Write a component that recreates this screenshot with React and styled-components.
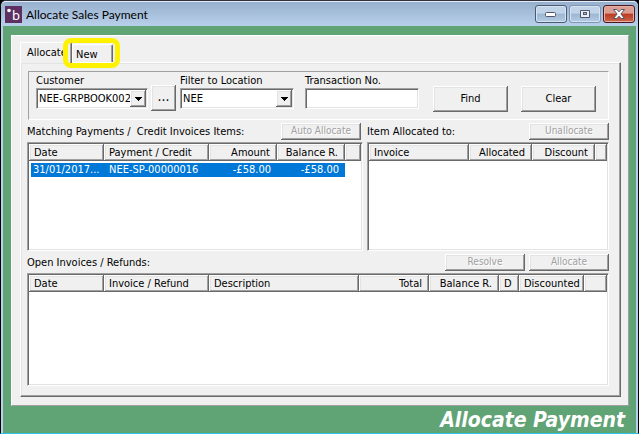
import React, { useState } from 'react';
import styled, { createGlobalStyle, css } from 'styled-components';

const GlobalStyle = createGlobalStyle`
  * {
    box-sizing: border-box;
  }
  body {
    margin: 0;
    background: #000;
  }
  body, button, input, select, table {
    font-family: "DejaVu Sans Condensed", "DejaVu Sans", Tahoma, sans-serif;
    font-size: 11px;
    line-height: 14px;
    color: #000;
  }
`;

const raised = css`
  box-shadow: inset -1px -1px #696969, inset 1px 1px #fff,
    inset -2px -2px #a0a0a0, inset 2px 2px #e3e3e3;
`;

const sunken = css`
  border: 1px solid;
  border-color: #a0a0a0 #fff #fff #a0a0a0;
  box-shadow: inset 1px 1px #696969, inset -1px -1px #e3e3e3;
`;

const Window = styled.div`
  display: flex;
  flex-direction: column;
  min-height: 100vh;
  padding: 0 2px;
  background: #b9d1ea;
  border: 1px solid #000;
  border-top-color: #30303c;
  border-bottom-color: #29c5e6;
  border-radius: 6px 6px 0 0;
`;

const TitleBar = styled.header`
  display: flex;
  align-items: center;
  height: 25px;
  margin: 0 -2px;
  padding: 0 3px 0 4px;
  border-top: 1px solid #e4edf7;
  border-radius: 5px 5px 0 0;
  background: linear-gradient(#97b0cd, #b8d0ea);
`;

const Title = styled.h1`
  flex: 1;
  margin: 0;
  padding: 2px 0 0 4px;
  font-family: Lato, "Segoe UI", sans-serif;
  font-size: 12px;
  font-weight: 400;
  line-height: 18px;
`;

const WindowButtons = styled.div`
  display: flex;
  gap: 2px;
`;

const WindowBtn = styled.button`
  display: flex;
  align-items: center;
  justify-content: center;
  width: 32px;
  height: 18px;
  padding: 0;
  border: 1px solid ${(p) => (p.$faded ? '#7d96b4' : '#4b5c72')};
  border-radius: 3px;
  background: linear-gradient(#c0d3e8 45%, #9db6d2 50%, #b4cce5);
  box-shadow: inset 0 0 0 1px #d5e3f2;
  ${(p) => p.$close && css`
    border-color: #4a1620;
    background: linear-gradient(#dc9d92 45%, #bb3a21 50%, #d0674c);
    box-shadow: inset 0 0 0 1px #e5b0a6;
  `}
`;

const Body = styled.main`
  display: flex;
  flex: 1;
  flex-direction: column;
  padding: 9px 7px 0 8px;
  background: #60a375;
`;

const Panel = styled.div`
  display: flex;
  flex: 1;
  flex-direction: column;
  padding: 6px 7px 8px 8px;
  background: #f0f0f0;
  border: 1px solid;
  border-color: #fff #a0a0a0 #a0a0a0 #fff;
`;

const Tabs = styled.div`
  position: relative;
  display: flex;
  align-items: flex-end;
  height: 20px;
`;

const Tab = styled.button`
  z-index: ${(p) => (p.$active ? 1 : 0)};
  min-width: ${(p) => p.$width}px;
  height: ${(p) => (p.$active ? 21 : 18)}px;
  margin-bottom: ${(p) => (p.$active ? -1 : 0)}px;
  padding: ${(p) => (p.$active ? '0 2px 1px 6px' : '2px 2px 0 3px')};
  background: #f0f0f0;
  border: 1px solid;
  border-color: #fff #696969 transparent #fff;
  border-bottom: 0;
  border-radius: 2px 2px 0 0;
  box-shadow: inset -1px 0 #a0a0a0;
  text-align: left;
`;

const TabHighlight = styled.span`
  position: absolute;
  z-index: 2;
  top: -4px;
  left: 43px;
  width: 57px;
  height: 30px;
  border: 5px solid #fff200;
  border-radius: 8px;
  pointer-events: none;
`;

const TabPage = styled.section`
  display: flex;
  flex: 1;
  flex-direction: column;
  padding: 8px 11px 10px 6px;
  border: 1px solid;
  border-color: #fff #696969 #696969 #fff;
  box-shadow: inset -1px -1px #a0a0a0, inset 1px 1px #e3e3e3;
`;

const Filters = styled.form`
  display: flex;
  align-items: flex-start;
  justify-content: space-between;
  height: 49px;
  margin-left: 1px;
  padding: 2px 12px 0 7px;
  border: 1px solid;
  border-color: #a0a0a0 #fff #fff #a0a0a0;
`;

const Fields = styled.div`
  display: flex;
`;

const Field = styled.div`
  display: flex;
  flex-direction: column;
  width: ${(p) => p.$width}px;
  margin-right: ${(p) => p.$gap || 0}px;
`;

const FieldLabel = styled.label`
  height: 14px;
`;

const Combo = styled.div`
  position: relative;
  display: flex;
`;

const Select = styled.select`
  ${sunken}
  width: 100%;
  height: 21px;
  padding: 0 17px 0 2px;
  appearance: none;
  background: #fff;
  border-radius: 0;
`;

const ComboArrow = styled.span`
  ${raised}
  position: absolute;
  top: 2px;
  right: 2px;
  display: flex;
  align-items: center;
  justify-content: center;
  width: 16px;
  height: 17px;
  background: #f0f0f0;
  pointer-events: none;
`;

const TextBox = styled.input`
  ${sunken}
  width: 100%;
  height: 21px;
  padding: 0 3px;
  background: #fff;
`;

const Button = styled.button`
  ${raised}
  width: ${(p) => p.$width}px;
  height: ${(p) => (p.$small ? 17 : 26)}px;
  padding: 0 0 1px;
  background: #f0f0f0;
  border: 0;
  font-size: ${(p) => (p.$small ? 10 : 11)}px;
  &:disabled {
    color: #a0a0a0;
    text-shadow: 1px 1px #fff;
  }
`;

const BrowseButton = styled(Button)`
  margin: 11px 4px 0 3px;
  padding-bottom: 4px;
  font-size: 14px;
`;

const SearchButtons = styled.div`
  display: flex;
  gap: 13px;
  padding-top: 12px;
`;

const Lists = styled.div`
  display: grid;
  grid-template-columns: 336fr 242fr;
  gap: 4px;
  margin-top: 3px;
`;

const ListHead = styled.div`
  display: flex;
  align-items: center;
  gap: 4px;
  height: 17px;
  margin-bottom: 2px;
  padding-right: ${(p) => p.$right || 0}px;
`;

const ListTitle = styled.h2`
  flex: 1;
  margin: 0;
  font-size: 11px;
  font-weight: 400;
  line-height: 14px;
  white-space: pre;
`;

const ListBox = styled.div`
  ${sunken}
  flex: 1;
  min-height: ${(p) => p.$height}px;
  padding: 1px;
  background: #fff;
`;

const Grid = styled.table`
  width: 100%;
  table-layout: fixed;
  border-collapse: separate;
  border-spacing: 0;
`;

const Th = styled.th`
  ${raised}
  height: 17px;
  padding: 1px 7px 0 5px;
  background: #f0f0f0;
  font-weight: 400;
  text-align: ${(p) => p.$align || 'left'};
  white-space: nowrap;
`;

const Spacer = styled.tr`
  height: 2px;
`;

const Td = styled.td`
  height: 14px;
  padding: 0 6px 0 5px;
  overflow: hidden;
  background: #0078d7;
  background-clip: padding-box;
  color: #fff;
  text-align: ${(p) => p.$align || 'left'};
  white-space: nowrap;
  &:first-child {
    padding: 0 0 0 2px;
    border-left: 2px solid #fff;
  }
`;

const OpenSection = styled.div`
  display: flex;
  flex: 1;
  flex-direction: column;
  margin-top: 3px;
`;

const Footer = styled.footer`
  padding: 2px 4px 0 0;
  color: #fff;
  font-size: 21px;
  font-style: italic;
  font-weight: 700;
  line-height: 25px;
  text-align: right;
`;

const paymentCols = [
  { label: 'Date', width: 75 },
  { label: 'Payment / Credit', width: 105 },
  { label: 'Amount', width: 68, align: 'right' },
  { label: 'Balance R.', width: 68, align: 'right' },
];

const allocatedCols = [
  { label: 'Invoice', width: 100 },
  { label: 'Allocated', width: 63, align: 'right' },
  { label: 'Discount', width: 63, align: 'right' },
];

const openCols = [
  { label: 'Date', width: 75 },
  { label: 'Invoice / Refund', width: 105 },
  { label: 'Description', width: 150 },
  { label: 'Total', width: 70, align: 'right' },
  { label: 'Balance R.', width: 70, align: 'right' },
  { label: 'D', width: 20 },
  { label: 'Discounted', width: 65 },
];

const payments = [['31/01/2017...', 'NEE-SP-00000016', '-£58.00', '-£58.00']];

const tabs = [
  { name: 'Allocate', width: 52 },
  { name: 'New', width: 41 },
];

function DataList({ label, cols, rows = [], height }) {
  return (
    <ListBox $height={height}>
      <Grid aria-label={label}>
        <colgroup>
          {cols.map((c) => <col key={c.label} width={c.width} />)}
          <col />
        </colgroup>
        <thead>
          <tr>
            {cols.map((c) => <Th key={c.label} $align={c.align}>{c.label}</Th>)}
            <Th as="td" />
          </tr>
        </thead>
        <tbody>
          <Spacer />
          {rows.map((row) => (
            <tr key={row[1]}>
              {row.map((cell, i) => <Td key={cols[i].label} $align={cols[i].align}>{cell}</Td>)}
            </tr>
          ))}
        </tbody>
      </Grid>
    </ListBox>
  );
}

function ComboBox({ id, value }) {
  return (
    <Combo>
      <Select id={id} defaultValue={value}>
        <option>{value}</option>
      </Select>
      <ComboArrow>
        <svg width="7" height="4" viewBox="0 0 7 4" shapeRendering="crispEdges">
          <path d="M0 0h7L3.5 4z" />
        </svg>
      </ComboArrow>
    </Combo>
  );
}

function Logo() {
  return (
    <svg width="17" height="17" viewBox="0 0 17 17">
      <rect width="17" height="17" fill="#5e3062" />
      <circle cx="4" cy="4.5" r="1.8" fill="#fff" />
      <text x="7" y="14" fill="#fff" fontFamily="Noto Sans" fontSize="13">b</text>
    </svg>
  );
}

export default function App() {
  const [tab, setTab] = useState('Allocate');

  return (
    <>
      <GlobalStyle />
      <Window>
        <TitleBar>
          <Logo />
          <Title>Allocate Sales Payment</Title>
          <WindowButtons>
            <WindowBtn aria-label="Minimize">
              <svg width="12" height="6" viewBox="0 0 12 6">
                <rect x=".5" y="1.5" width="10" height="4" rx="1" fill="#fff" stroke="#535666" />
              </svg>
            </WindowBtn>
            <WindowBtn $faded aria-label="Maximize">
              <svg width="12" height="10" viewBox="0 0 12 10">
                <rect x="1" y="1" width="10" height="8" rx="1" fill="#535666" />
                <rect x="2" y="2" width="8" height="6" fill="#e8eef6" />
                <rect x="4.5" y="3.5" width="3" height="2" fill="#a9bfd8" stroke="#535666" />
              </svg>
            </WindowBtn>
            <WindowBtn $close aria-label="Close">
              <svg width="12" height="10" viewBox="0 0 12 10">
                <path d="M.5.5h3.3L6 2.8 8.2.5h3.3L7.9 5l3.6 4.5H8.2L6 7.2 3.8 9.5H.5L4.1 5z" fill="#fff" stroke="#535666" />
              </svg>
            </WindowBtn>
          </WindowButtons>
        </TitleBar>
        <Body>
          <Panel>
            <Tabs role="tablist">
              {tabs.map(({ name, width }) => (
                <Tab
                  key={name}
                  role="tab"
                  aria-selected={tab === name}
                  $active={tab === name}
                  $width={width}
                  onClick={() => setTab(name)}
                >
                  {name}
                </Tab>
              ))}
              <TabHighlight />
            </Tabs>
            <TabPage>
              <Filters onSubmit={(e) => e.preventDefault()}>
                <Fields>
                  <Field $width={112}>
                    <FieldLabel htmlFor="customer">Customer</FieldLabel>
                    <ComboBox id="customer" value="NEE-GRPBOOK002" />
                  </Field>
                  <BrowseButton type="button" $width={25} aria-label="Browse customers">...</BrowseButton>
                  <Field $width={114} $gap={11}>
                    <FieldLabel htmlFor="location">Filter to Location</FieldLabel>
                    <ComboBox id="location" value="NEE" />
                  </Field>
                  <Field $width={114}>
                    <FieldLabel htmlFor="transaction">Transaction No.</FieldLabel>
                    <TextBox id="transaction" />
                  </Field>
                </Fields>
                <SearchButtons>
                  <Button $width={75}>Find</Button>
                  <Button type="reset" $width={75}>Clear</Button>
                </SearchButtons>
              </Filters>
              <Lists>
                <div>
                  <ListHead $right={2}>
                    <ListTitle>Matching Payments /  Credit Invoices Items:</ListTitle>
                    <Button $small $width={80} disabled>Auto Allocate</Button>
                  </ListHead>
                  <DataList label="Matching payments" cols={paymentCols} rows={payments} height={109} />
                </div>
                <div>
                  <ListHead>
                    <ListTitle>Item Allocated to:</ListTitle>
                    <Button $small $width={80} disabled>Unallocate</Button>
                  </ListHead>
                  <DataList label="Item allocated to" cols={allocatedCols} height={109} />
                </div>
              </Lists>
              <OpenSection>
                <ListHead>
                  <ListTitle>Open Invoices / Refunds:</ListTitle>
                  <Button $small $width={80} disabled>Resolve</Button>
                  <Button $small $width={80} disabled>Allocate</Button>
                </ListHead>
                <DataList label="Open invoices" cols={openCols} height={100} />
              </OpenSection>
            </TabPage>
          </Panel>
          <Footer>Allocate Payment</Footer>
        </Body>
      </Window>
    </>
  );
}
